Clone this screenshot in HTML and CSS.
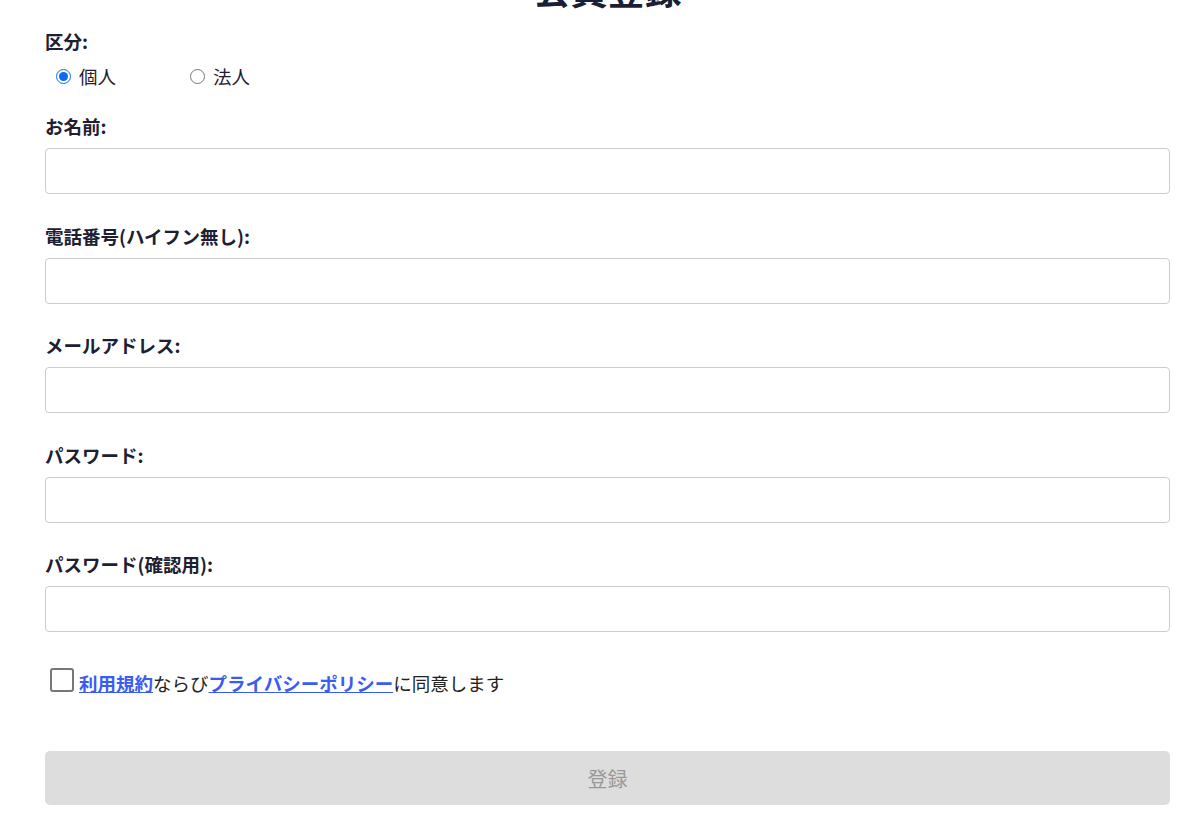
FILE: index.html
```html
<!DOCTYPE html>
<html lang="ja">
<head>
<meta charset="UTF-8">
<title>会員登録</title>
<link rel="stylesheet" href="styles.css">
</head>
<body>
<div class="con">
    <h1 class="title">会員登録</h1>
    <form class="form">
        <div class="group">
            <label class="label">区分:</label>
            <div class="radios">
                <label class="radio"><input type="radio" name="kind" checked> 個人</label>
                <label class="radio"><input type="radio" name="kind"> 法人</label>
            </div>
        </div>
        <div class="group">
            <label class="label">お名前:</label>
            <input class="field" type="text">
        </div>
        <div class="group">
            <label class="label">電話番号(ハイフン無し):</label>
            <input class="field" type="text">
        </div>
        <div class="group">
            <label class="label">メールアドレス:</label>
            <input class="field" type="text">
        </div>
        <div class="group">
            <label class="label">パスワード:</label>
            <input class="field" type="password">
        </div>
        <div class="group">
            <label class="label">パスワード(確認用):</label>
            <input class="field" type="password">
        </div>
        <div class="agree">
            <span class="box"></span>
            <span><a href="javascript:;">利用規約</a>ならび<a href="javascript:;">プライバシーポリシー</a>に同意します</span>
        </div>
        <button class="submit" type="button" disabled>登録</button>
    </form>
</div>
</body>
</html>
```

FILE: styles.css
```css
*{margin:0;padding:0;box-sizing:border-box;}
body{
	background:#fff;
	font-family:"Noto Sans CJK JP","Noto Sans",sans-serif;
	color:#1d2033;
}
.con{width:1125px;margin:-38px 0 0 45px;}
.title{
	text-align:center;
	font-size:37px;
	line-height:54px;
	font-weight:bold;
	color:#1a1f36;
	margin-bottom:13px;
}
.group{margin-bottom:29.5px;}
.group:first-child{margin-bottom:25px;}
.label{
	display:block;
	font-size:18.5px;
	font-weight:bold;
	line-height:25px;
	margin-bottom:9px;
}
.radios{display:flex;padding-left:11px;height:26px;align-items:center;}
.radio{
	display:flex;
	align-items:center;
	width:134px;
	font-size:18.5px;
	gap:8px;
}
.radio input{width:15px;height:15px;margin:0;accent-color:#0b6cf0;}
.field{
	display:block;
	width:100%;
	height:46px;
	border:1px solid #ccc;
	border-radius:4px;
	background:#fff;
}
.agree{
	display:flex;
	align-items:center;
	gap:5px;
	margin-top:38px;
	padding-left:5px;
	font-size:18.5px;
	color:#222;
}
.box{
	width:24px;
	height:24px;
	border:2px solid #777;
	border-radius:3px;
	margin-top:-6px;
}
.agree a{color:#3a5cf5;font-weight:bold;text-decoration:underline;}
.submit{
	display:block;
	width:100%;
	height:54px;
	margin-top:55px;
	border:none;
	border-radius:5px;
	background:#ddd;
	color:#999;
	font-size:20px;
	font-family:inherit;
}
```
